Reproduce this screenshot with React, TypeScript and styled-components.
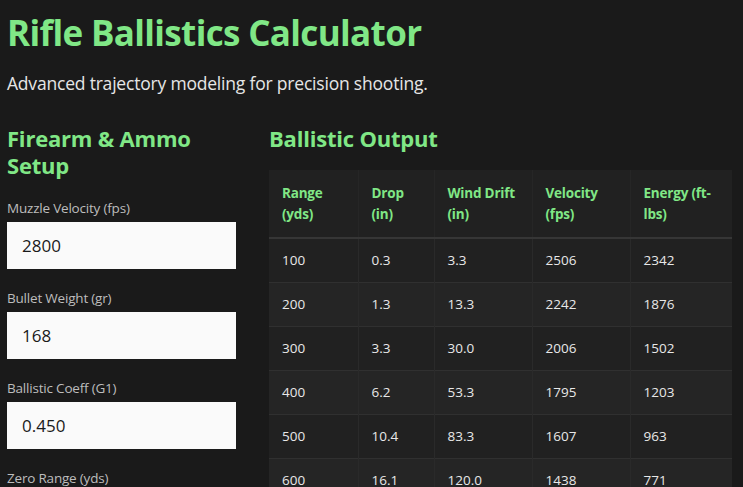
import React from 'react';
import styled, { createGlobalStyle } from 'styled-components';

const GlobalStyle = createGlobalStyle`
  html, body {
    margin: 0;
    padding: 0;
    background: #1a1a1a;
    overflow: hidden;
  }

  body {
    font-family: "Open Sans", "Noto Sans", sans-serif;
    color: #e0e0e0;
  }

  * {
    box-sizing: border-box;
  }
`;

const Page = styled.div`
  padding: 11px 7px 40px;
`;

const Title = styled.h1`
  margin: 0;
  font-size: 35px;
  line-height: 44px;
  font-weight: 700;
  color: #80e786;
  letter-spacing: -0.65px;
`;

const Subtitle = styled.p`
  margin: 15px 0 0;
  font-size: 17.5px;
  line-height: 26px;
  color: #e6e6e6;
  letter-spacing: -0.2px;
`;

const Columns = styled.div`
  display: grid;
  grid-template-columns: 229px 1fr;
  column-gap: 33px;
  margin-top: 29px;
  align-items: start;
`;

const SectionTitle = styled.h2`
  margin: 0;
  font-size: 22px;
  line-height: 27px;
  font-weight: 700;
  color: #80e786;
  letter-spacing: -0.2px;
`;

const Form = styled.div`
  display: flex;
  flex-direction: column;
  gap: 19px;
  margin-top: 19px;
`;

const Field = styled.label`
  display: flex;
  flex-direction: column;
  gap: 4px;
`;

const FieldLabel = styled.span`
  font-size: 13.5px;
  line-height: 20px;
  color: #bdbdbd;
  letter-spacing: -0.2px;
`;

const Input = styled.input`
  width: 100%;
  height: 47px;
  padding: 0 15px;
  border: none;
  outline: none;
  background: #fafafa;
  color: #1a1a1a;
  font-family: inherit;
  font-size: 17px;
`;

const TableWrap = styled.div`
  margin-top: 18px;
  overflow-x: auto;
`;

const Table = styled.table`
  width: 463px;
  border-collapse: collapse;
  table-layout: fixed;
  font-size: 13.5px;
`;

const HeadCell = styled.th<{ w: number }>`
  width: ${(p) => p.w}px;
  padding: 13px 13px 12px;
  text-align: left;
  vertical-align: middle;
  font-weight: 700;
  line-height: 21px;
  color: #80e786;
  background: #212121;
  border-right: 1px solid #262626;
  border-bottom: 2px solid #363636;
  letter-spacing: -0.2px;

  &:last-child {
    border-right: none;
  }
`;

const Row = styled.tr<{ alt: boolean }>`
  background: ${(p) => (p.alt ? '#252525' : '#212121')};
  border-bottom: 1px solid #303030;
`;

const Cell = styled.td`
  padding: 11px 13px 11px;
  line-height: 21px;
  color: #e8e8e8;
  border-right: 1px solid #2a2a2a;

  &:last-child {
    border-right: none;
  }
`;

const fields = [
  { label: 'Muzzle Velocity (fps)', value: '2800' },
  { label: 'Bullet Weight (gr)', value: '168' },
  { label: 'Ballistic Coeff (G1)', value: '0.450' },
  { label: 'Zero Range (yds)', value: '100' },
];

const columns = [
  { title: 'Range (yds)', width: 89 },
  { title: 'Drop (in)', width: 76 },
  { title: 'Wind Drift (in)', width: 98 },
  { title: 'Velocity (fps)', width: 98 },
  { title: 'Energy (ft-lbs)', width: 102 },
];

const rows = [
  ['100', '0.3', '3.3', '2506', '2342'],
  ['200', '1.3', '13.3', '2242', '1876'],
  ['300', '3.3', '30.0', '2006', '1502'],
  ['400', '6.2', '53.3', '1795', '1203'],
  ['500', '10.4', '83.3', '1607', '963'],
  ['600', '16.1', '120.0', '1438', '771'],
];

export default function App() {
  return (
    <>
      <GlobalStyle />
      <Page>
        <Title>Rifle Ballistics Calculator</Title>
        <Subtitle>Advanced trajectory modeling for precision shooting.</Subtitle>
        <Columns>
          <section>
            <SectionTitle>Firearm &amp; Ammo Setup</SectionTitle>
            <Form>
              {fields.map((f) => (
                <Field key={f.label}>
                  <FieldLabel>{f.label}</FieldLabel>
                  <Input type="text" defaultValue={f.value} />
                </Field>
              ))}
            </Form>
          </section>
          <section>
            <SectionTitle>Ballistic Output</SectionTitle>
            <TableWrap>
              <Table>
                <thead>
                  <tr>
                    {columns.map((c) => (
                      <HeadCell key={c.title} w={c.width}>
                        {c.title}
                      </HeadCell>
                    ))}
                  </tr>
                </thead>
                <tbody>
                  {rows.map((r, i) => (
                    <Row key={r[0]} alt={i % 2 === 1}>
                      {r.map((v, j) => (
                        <Cell key={j}>{v}</Cell>
                      ))}
                    </Row>
                  ))}
                </tbody>
              </Table>
            </TableWrap>
          </section>
        </Columns>
      </Page>
    </>
  );
}
